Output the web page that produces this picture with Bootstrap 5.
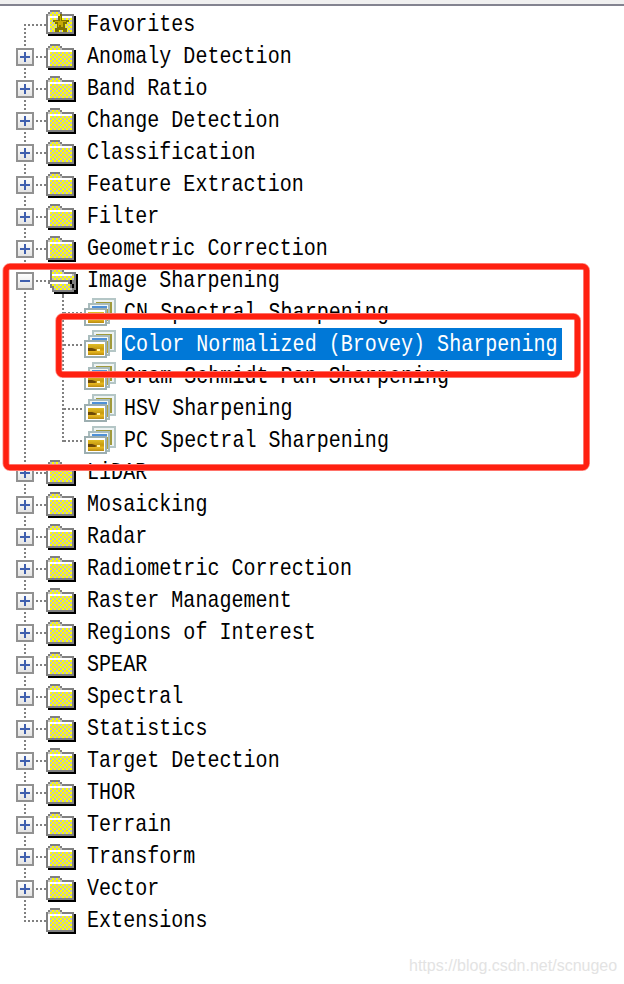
<!DOCTYPE html>
<html lang="en">
<head>
<meta charset="utf-8">
<meta name="viewport" content="width=device-width, initial-scale=1">
<title>Toolbox</title>
<link href="https://cdn.jsdelivr.net/npm/bootstrap@5.3.0/dist/css/bootstrap.min.css" rel="stylesheet">
<style>
body{width:624px;height:984px;overflow:hidden;background:#fff;color:#000}
.topbar{height:6px;background:#f0f0f0;border-bottom:2px solid #838390}
.tree{padding-top:2px}
.node{height:32px}
.gutter{width:46px;height:32px;flex:none}
.gutter.deep{width:84px}
.pic{width:36px;height:32px;flex:none;margin-right:5px}
.deep+.pic{margin-right:4px}
.pic,.gutter{display:block;shape-rendering:crispEdges}
.photo{shape-rendering:auto}
.caption{font:20px/32px "Liberation Mono",monospace;letter-spacing:.04px;height:32px;white-space:pre}
.caption>span{display:inline-block;transform:scaleY(1.17);transform-origin:0 22px;position:relative;top:2px}
.picked{background:#0078d7;color:#fff;width:440px;padding-left:2px;margin-left:-2px}
.marks{left:0;top:0;pointer-events:none}
.source{left:409px;top:956px;font:16px/20px "Liberation Sans",sans-serif;color:#e3e3e3;white-space:nowrap}
</style>
<script src="https://cdn.jsdelivr.net/npm/bootstrap@5.3.0/dist/js/bootstrap.bundle.min.js"></script>
</head>
<body class="position-relative m-0">
<svg width="0" height="0" class="position-absolute">
<defs>
<linearGradient id="btn" x2="0" y2="1"><stop stop-color="#fff"/><stop offset="1" stop-color="#e2e2e2"/></linearGradient>
<linearGradient id="gold" x2="0" y2="1"><stop stop-color="#e0bd24"/><stop offset=".45" stop-color="#c79a10"/><stop offset=".7" stop-color="#e8b820"/><stop offset="1" stop-color="#b88a10"/></linearGradient>
<pattern id="chk" width="4" height="4" patternUnits="userSpaceOnUse"><path fill="#c0c0c0" d="M0 0h4v4h-4z"/><path fill="#ff0" d="M0 0h2v2h-2zM2 2h2v2h-2z"/></pattern>
<g id="folder"><path fill="#000" d="M28 6h2v20H2v-2h26z"/><path fill="#808080" d="M4 0h10v2h2v2h12v20H0V4h2V2h2z"/><path fill="#fff" d="M2 6h24v16H2z"/><path fill="url(#chk)" d="M4 2h10v2h2v2H2V4h2zM4 8h22v14H4z"/></g>
<g id="star"><path fill="#7f7200" d="M14 4h2v6h7v2h-2v2h-2v4h2v4h-4v-2h-4v2H9v-4h2v-4H9v-2H7v-2h5V6h2z"/><path fill="#c4a808" d="M14 6h1v5h5v1h-3v5h-2v-2h-2v2h-1v-5h-3v-1h5z"/></g>
<g id="open"><path fill="#000" d="M28 6h2v20H6v-2h22z"/><path fill="#808080" d="M4 0h10v2h2v2h12v20H4v-4H2v-4H0v-4h2V2h2z"/><path fill="url(#chk)" d="M4 2h10v2h2v2h10v6H4z"/><path fill="#fff" d="M4 6h20v2H4zM2 14h18v2H2z"/><path fill="url(#chk)" d="M4 16h18v4h2v2H6v-4H4z"/><path fill="#000" d="M22 12h2v4h2v6h2v2h-2v-4h-2v-4h-2z"/></g>
<g id="photos">
<path fill="#edf3f3" stroke="#b4c6c6" stroke-width="2" d="M9 1h22v20H9z"/><path fill="#a09a3c" d="M12 4h16v15H12z"/>
<path fill="#f1f6f6" stroke="#a9bcbd" stroke-width="2" d="M5 6h20v19H5z"/><path fill="#4e90d8" d="M8 8h15v4H8z"/><path fill="#b1a23e" d="M22 11h2v12h-2z"/>
<path fill="#fff" stroke="#9caeb0" stroke-width="2" d="M1 11h21v16H1z"/><path fill="url(#gold)" d="M4 14h16v11H4z"/><path fill="#5b3905" opacity=".85" d="M4 18h4l3 1 2 1-2 1H4z"/><path fill="#fff4a5" d="M13 19h3v2h-3z"/></g>
</defs></svg>
<div class="topbar"></div>
<main class="tree d-flex flex-column" id="tree"></main>
<svg class="marks position-absolute" width="624" height="984" fill="none">
<g stroke="#ff8f88" stroke-width="7"><rect x="6" y="266.5" width="580.5" height="201" rx="4"/><rect x="58.8" y="316.5" width="518.7" height="58" rx="4"/></g>
<g stroke="#ff2010" stroke-width="5.4"><rect x="6" y="266.5" width="580.5" height="201" rx="4"/><rect x="58.8" y="316.5" width="518.7" height="58" rx="4"/></g>
</svg>
<div class="source position-absolute">https://blog.csdn.net/scnugeo</div>
<script>
const names=["Favorites","Anomaly Detection","Band Ratio","Change Detection","Classification","Feature Extraction","Filter","Geometric Correction","Image Sharpening",">CN Spectral Sharpening",">Color Normalized (Brovey) Sharpening",">Gram-Schmidt Pan Sharpening",">HSV Sharpening",">PC Spectral Sharpening","LiDAR","Mosaicking","Radar","Radiometric Correction","Raster Management","Regions of Interest","SPEAR","Spectral","Statistics","Target Detection","THOR","Terrain","Transform","Vector","Extensions"];
const last=names.length-1;
const dots=d=>`<path d="${d}" stroke="#808080" stroke-width="2" stroke-dasharray="2 2" fill="none"/>`;
document.getElementById("tree").innerHTML=names.map((n,i)=>{
  const deep=n[0]===">",label=deep?n.slice(1):n,leaf=i===0||i===last;
  let g=dots(`M25 ${i?0:16}V${i===last?18:32}`);
  if(deep) g+=dots(`M63 0V${label[0]==="P"?18:32}`)+dots("M64 17H84");
  else g+=dots(leaf?"M24 17H46":"M36 17H46");
  if(!deep&&!leaf) g+=`<rect x="17" y="9" width="16" height="16" fill="url(#btn)" stroke="#919191" stroke-width="2"/><path fill="#3f5fae" d="M20 16h10v2H20z${i===8?"":"M24 12h2v10h-2z"}"/>`;
  let p=deep?'<use href="#photos" x="0" y="2"/>':i===8?'<use href="#open" x="2" y="4"/>':`<use href="#folder" y="${i?4:2}"/>`;
  if(i===0) p+='<use href="#star" y="2"/>';
  if(i===8) p+=dots("M17 30V32");
  return `<div class="node d-flex"><svg class="gutter ${deep?"deep":""}">${g}</svg><svg class="pic ${deep?"photo":""}">${p}</svg><div class="caption ${i===10?"picked":""}"><span>${label}</span></div></div>`;
}).join("");
</script>
</body>
</html>
